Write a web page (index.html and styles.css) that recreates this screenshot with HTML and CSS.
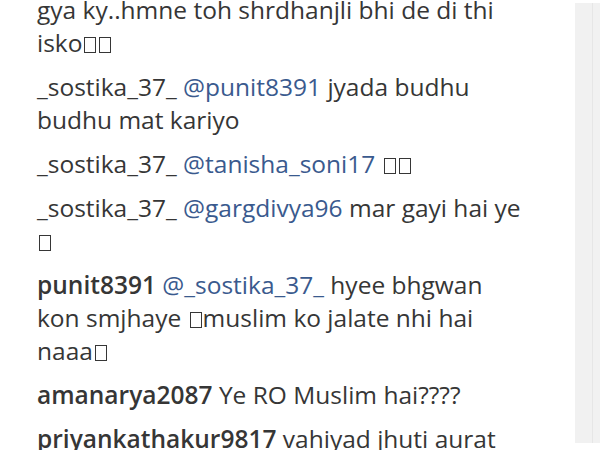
FILE: index.html
```html
<!DOCTYPE html>
<html>
<head>
<meta charset="utf-8">
<link rel="stylesheet" href="styles.css">
</head>
<body>
<div class="page">
  <ul class="comments">
    <li class="comment">gya ky..hmne toh shrdhanjli bhi de di thi<br>isko<span class="tofu"></span><span class="tofu"></span></li>
    <li class="comment"><span class="user">_sostika_37_</span> <a class="mention">@punit8391</a> jyada budhu<br>budhu mat kariyo</li>
    <li class="comment"><span class="user">_sostika_37_</span> <a class="mention">@tanisha_soni17</a> <span class="tofu"></span><span class="tofu"></span></li>
    <li class="comment"><span class="user">_sostika_37_</span> <a class="mention">@gargdivya96</a> mar gayi hai ye<br><span class="tofu"></span></li>
    <li class="comment"><span class="user bold">punit8391</span> <a class="mention">@_sostika_37_</a> hyee bhgwan<br>kon smjhaye <span class="tofu"></span>muslim ko jalate nhi hai<br>naaa<span class="tofu"></span></li>
    <li class="comment"><span class="user bold">amanarya2087</span> Ye RO Muslim hai????</li>
    <li class="comment"><span class="user bold">priyankathakur9817</span> vahiyad jhuti aurat</li>
  </ul>
  <aside class="side"><div class="side-line"></div></aside>
</div>
</body>
</html>
```
FILE: styles.css
```css
html, body {
  margin: 0;
  padding: 0;
  background: #ffffff;
  overflow: hidden;
}
.page {
  display: flex;
  width: 600px;
  height: 450px;
  overflow: hidden;
}
.comments {
  list-style: none;
  margin: -7px 0 0 0;
  padding: 0 0 0 37px;
  flex: 1;
  font-family: "Open Sans", "Noto Sans", sans-serif;
  font-size: 24.5px;
  line-height: 33px;
  color: #363636;
}
.comment {
  margin: 0 0 11px 0;
  white-space: nowrap;
}
.user {
  font-weight: 400;
}
.user.bold {
  font-weight: 600;
}
.mention {
  color: #3a5a8e;
  text-decoration: none;
}
.tofu {
  display: inline-block;
  width: 10px;
  height: 14px;
  border: 1.5px solid #363636;
  margin: 0 1px 0 2px;
  vertical-align: -1px;
}
.side {
  width: 25px;
  margin: 3px 0 7px 0;
  background: #f1f1f1;
  display: flex;
  justify-content: flex-end;
  padding-right: 7px;
  box-sizing: border-box;
}
.side-line {
  width: 1px;
  background: #e6e6e6;
}
```
